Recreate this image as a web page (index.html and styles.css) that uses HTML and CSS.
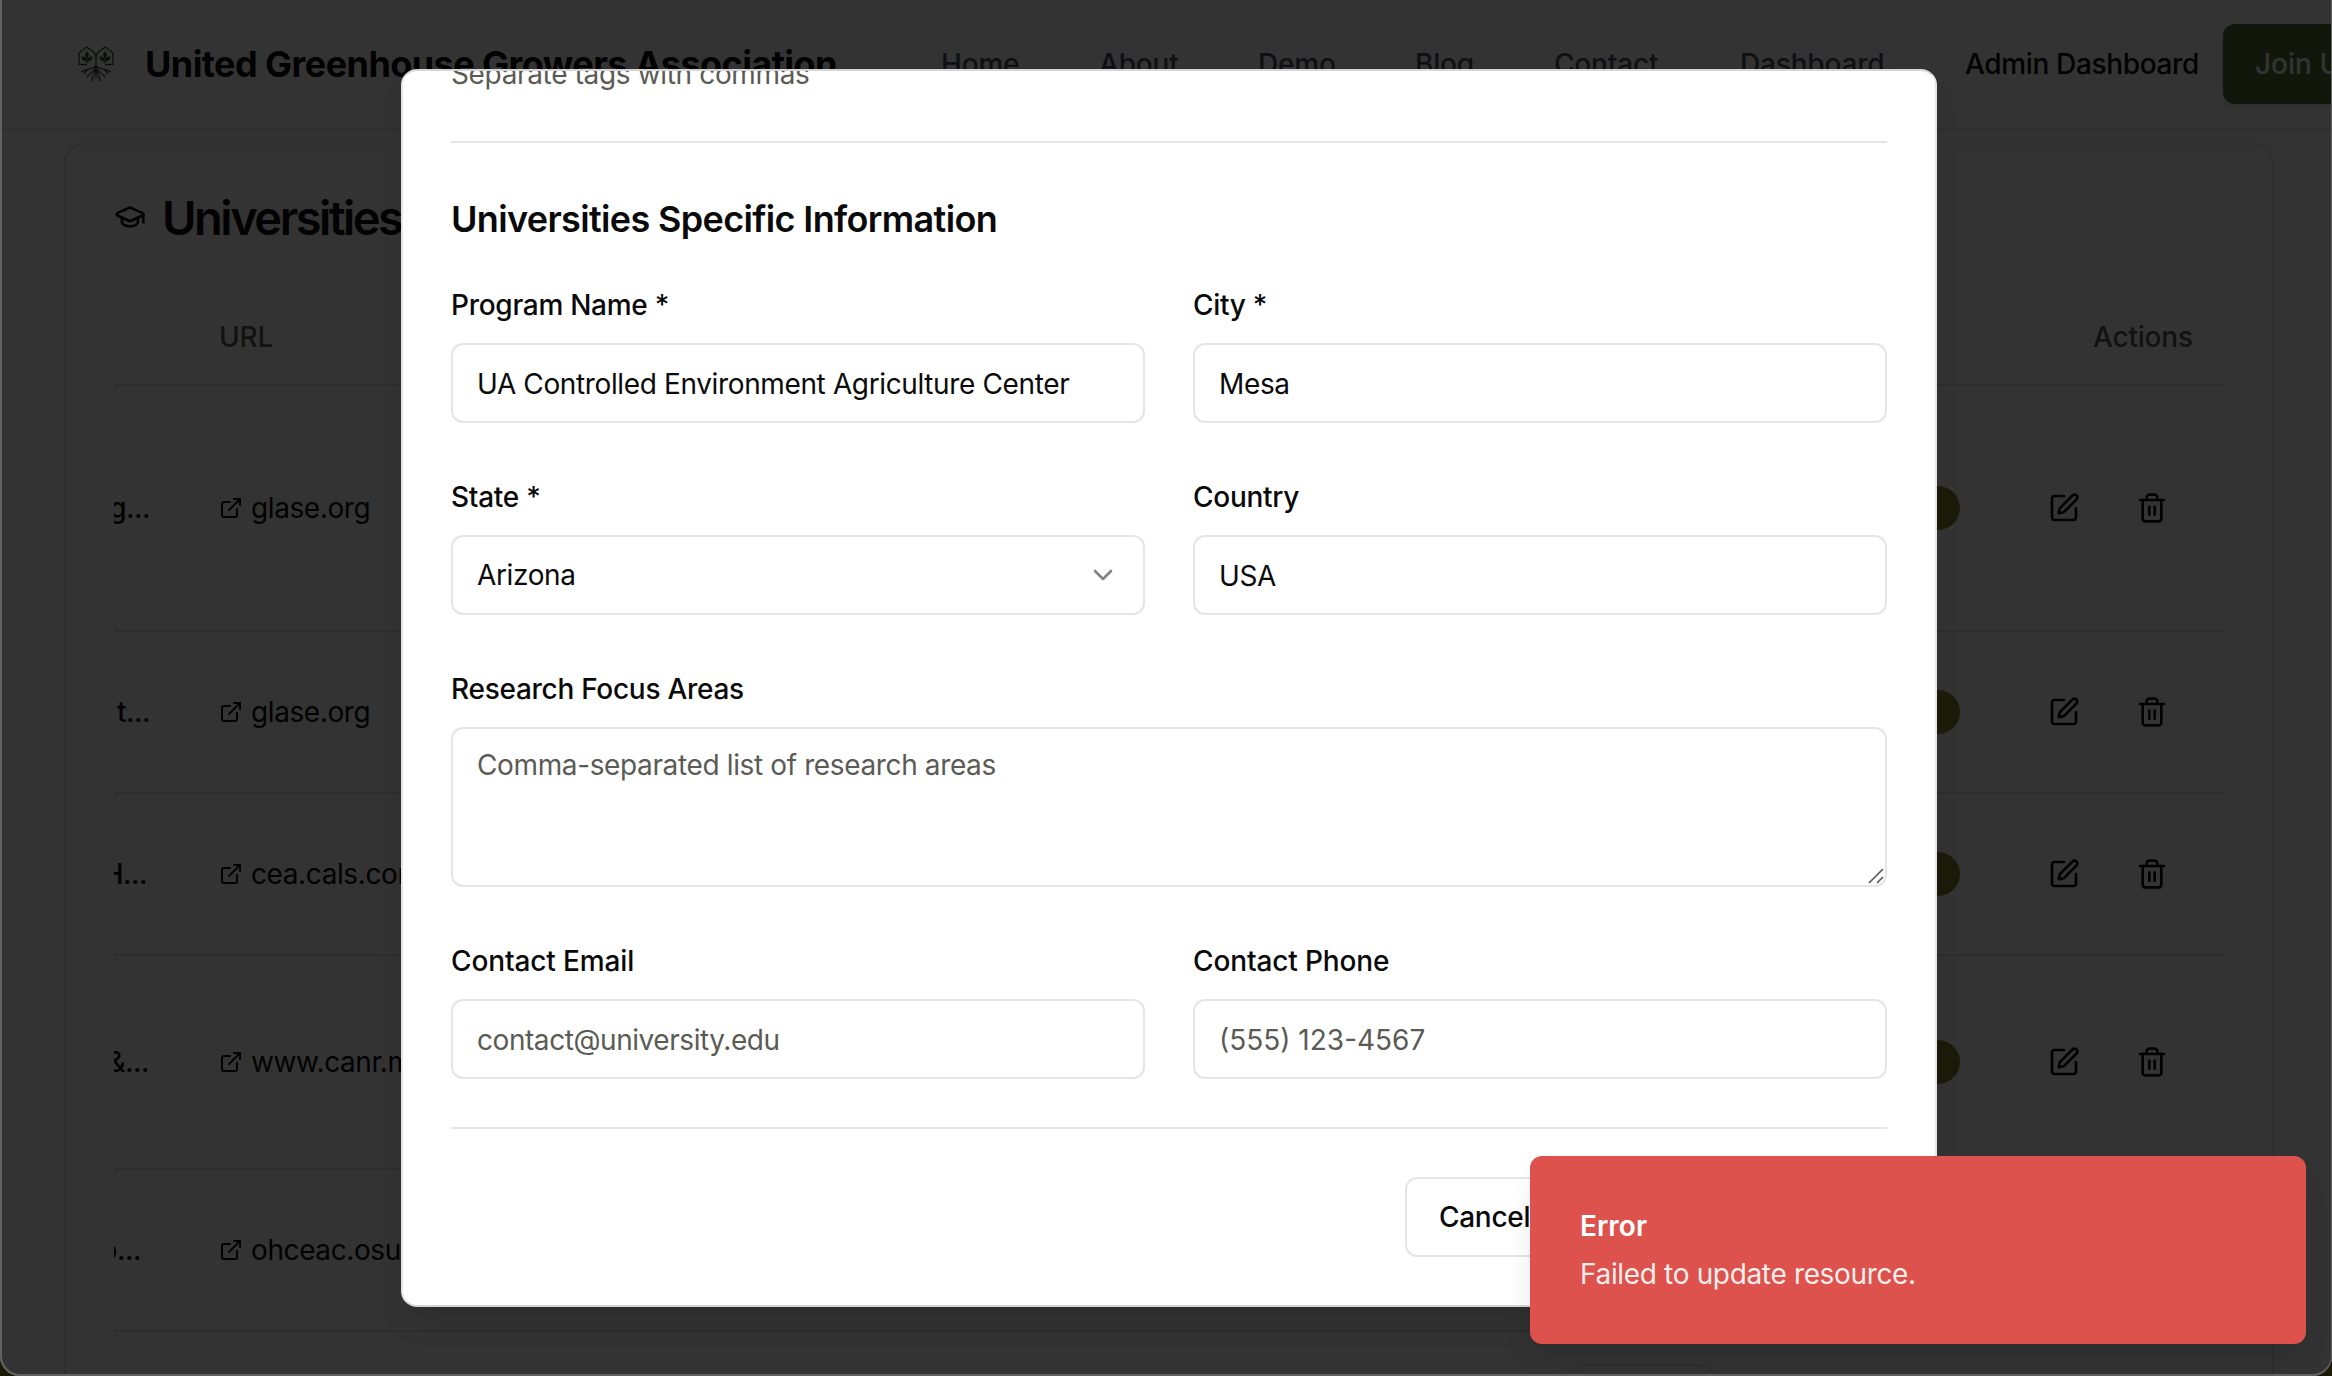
FILE: index.html
```html
<!DOCTYPE html>
<html lang="en">
<head>
<meta charset="utf-8">
<title>Admin Dashboard</title>
<link rel="stylesheet" href="styles.css">
</head>
<body>
<svg class="sprite" aria-hidden="true">
  <symbol id="edit" viewBox="0 0 24 24"><path d="M12 3H5a2 2 0 0 0-2 2v14a2 2 0 0 0 2 2h14a2 2 0 0 0 2-2v-7"/><path d="M18.375 2.625a1 1 0 0 1 3 3l-9.013 9.014a2 2 0 0 1-.853.505l-2.873.84a.5.5 0 0 1-.62-.62l.84-2.873a2 2 0 0 1 .506-.852z"/></symbol>
  <symbol id="trash" viewBox="0 0 24 24"><path d="M3 6h18"/><path d="M19 6v14c0 1-1 2-2 2H7c-1 0-2-1-2-2V6"/><path d="M8 6V4c0-1 1-2 2-2h4c1 0 2 1 2 2v2"/><path d="M10 11v6"/><path d="M14 11v6"/></symbol>
  <symbol id="external" viewBox="0 0 24 24"><path d="M15 3h6v6"/><path d="M10 14 21 3"/><path d="M18 13v6a2 2 0 0 1-2 2H5a2 2 0 0 1-2-2V8a2 2 0 0 1 2-2h6"/></symbol>
  <symbol id="cap" viewBox="0 0 24 24"><path d="M21.42 10.922a1 1 0 0 0-.019-1.838L12.83 5.18a2 2 0 0 0-1.66 0L2.6 9.08a1 1 0 0 0 0 1.832l8.57 3.908a2 2 0 0 0 1.66 0z"/><path d="M22 10v6"/><path d="M6 12.5V16a6 3 0 0 0 12 0v-3.5"/></symbol>
  <symbol id="chevron" viewBox="0 0 24 24"><path d="m6 9 6 6 6-6"/></symbol>
</svg>
<div class="window">
  <header class="topbar">
    <svg class="logo" viewBox="0 0 36 36"><path d="M9 18.5H1V7l7.500-6L16 6.500Q18 9 18 13v11M27 18.500h8V7l-7.500-6L20 6.500Q18 9 18 13"/><path d="M9 17v-7M27 17v-7M18 19c-2 5-8 3-15 7M18 19c2 5 8 3 15 7M18 21c-1 5-5 5-9 10M18 21c1 5 5 5 9 10M17 24c0 4-3 6-3 11M19 24c0 4 3 6 3 11M18 24v9M9 24.500l-3 3.500M27 24.500l3 3.500"/><path class="leaf" d="M9 5.500c3 3 2 5 0 7-2-2-3-4 0-7zM27 5.500c3 3 2 5 0 7-2-2-3-4 0-7zM3.500 10.500c4 0 5 2 5.300 5-3 0-5-1-5.300-5zM14.500 10.500c-4 0-5 2-5.300 5 3 0 5-1 5.300-5zM21.500 10.500c4 0 5 2 5.300 5-3 0-5-1-5.300-5zM32.500 10.500c-4 0-5 2-5.300 5 3 0 5-1 5.300-5z"/></svg>
    <span class="brand">United Greenhouse Growers Association</span>
    <nav class="nav">
      <a class="n1">Home</a><a class="n2">About</a><a class="n3">Demo</a><a class="n4">Blog</a><a class="n5">Contact</a><a class="n6">Dashboard</a>
    </nav>
    <a class="admin">Admin Dashboard</a>
    <a class="join">Join Us</a>
  </header>
  <main class="card">
    <h2 class="card-title"><svg class="icon cap"><use href="#cap"/></svg>Universities</h2>
    <div class="table">
      <div class="row head"><span class="name"></span><span class="url">URL</span><span class="actions-label">Actions</span></div>
      <div class="row tall"><span class="name">Greenhouse Lighting and Systems Eng...</span><span class="url link"><svg class="icon ext"><use href="#external"/></svg>glase.org</span><span class="badge"></span><span class="actions"><svg class="icon"><use href="#edit"/></svg><svg class="icon"><use href="#trash"/></svg></span></div>
      <div class="row"><span class="name">Consortium t...</span><span class="url link"><svg class="icon ext"><use href="#external"/></svg>glase.org</span><span class="badge"></span><span class="actions"><svg class="icon"><use href="#edit"/></svg><svg class="icon"><use href="#trash"/></svg></span></div>
      <div class="row"><span class="name inset-s">Cornell CEA H...</span><span class="url link"><svg class="icon ext"><use href="#external"/></svg>cea.cals.cornell.edu</span><span class="badge"></span><span class="actions"><svg class="icon"><use href="#edit"/></svg><svg class="icon"><use href="#trash"/></svg></span></div>
      <div class="row mid"><span class="name inset-xs">Floriculture &amp;...</span><span class="url link"><svg class="icon ext"><use href="#external"/></svg>www.canr.msu.edu</span><span class="badge"></span><span class="actions"><svg class="icon"><use href="#edit"/></svg><svg class="icon"><use href="#trash"/></svg></span></div>
      <div class="row"><span class="name inset-l">Ohio CEA Co...</span><span class="url link"><svg class="icon ext"><use href="#external"/></svg>ohceac.osu.edu</span><span class="badge"></span><span class="actions"><svg class="icon"><use href="#edit"/></svg><svg class="icon"><use href="#trash"/></svg></span></div>
    </div>
    <div class="pager"></div>
  </main>
  <div class="overlay"></div>
  <section class="modal">
    <p class="hint"><span class="hint-text">Separate tags with commas</span></p>
    <form class="form">
      <h3 class="section-title">Universities Specific Information</h3>
      <div class="grid">
        <div class="field"><label>Program Name *</label><div class="input">UA Controlled Environment Agriculture Center</div></div>
        <div class="field"><label>City *</label><div class="input">Mesa</div></div>
        <div class="field"><label>State *</label><div class="input select">Arizona<svg class="icon chev"><use href="#chevron"/></svg></div></div>
        <div class="field"><label>Country</label><div class="input">USA</div></div>
        <div class="field wide"><label>Research Focus Areas</label><div class="input area muted">Comma-separated list of research areas<svg class="grip" viewBox="0 0 16 16"><path d="M1 15 15 1M9 15l6-6"/></svg></div></div>
        <div class="field"><label class="loose">Contact Email</label><div class="input muted email">contact@university.edu</div></div>
        <div class="field"><label class="loose">Contact Phone</label><div class="input muted phone">(555) 123-4567</div></div>
      </div>
      <div class="footer"><span class="cancel">Cancel</span><span class="submit"></span></div>
    </form>
  </section>
  <aside class="toast"><strong>Error</strong><p>Failed to update resource.</p></aside>
  <div class="frame"></div>
</div>
</body>
</html>
```
FILE: styles.css
```css
* { box-sizing: border-box; }
body { margin: 0; width: 2332px; height: 1376px; overflow: hidden; background: #1c1a06; font: 28px/40px Inter, "Liberation Sans", sans-serif; color: #0a0a0a; }
p, h2, h3 { margin: 0; }
.sprite { position: absolute; width: 0; height: 0; }
.icon { width: 32px; height: 32px; fill: none; stroke: currentColor; stroke-width: 2; stroke-linecap: round; stroke-linejoin: round; flex: none; }
.window { position: relative; width: 2332px; height: 1376px; overflow: hidden; background: #fff; border-radius: 0 0 20px 20px; }
.topbar { display: flex; align-items: center; height: 128px; padding-left: 78px; box-shadow: 0 2px 5px rgba(0,0,0,.12); white-space: nowrap; }
.logo { width: 36px; height: 36px; margin-right: 31px; fill: none; stroke: #3c4a42; stroke-width: 1.3; flex: none; }
.leaf { fill: #34502e; stroke: none; }
.brand { width: 796px; font-size: 36px; font-weight: 700; letter-spacing: -.56px; flex: none; }
.nav { display: flex; width: 1024px; color: #4b5060; font-weight: 500; letter-spacing: -.17px; flex: none; }
.n1 { width: 158px; } .n2 { width: 159px; } .n3 { width: 157px; } .n4 { width: 139px; } .n5 { width: 186px; }
.admin { width: 258px; font-weight: 500; letter-spacing: -.35px; flex: none; }
.join { flex: none; width: 170px; height: 80px; padding: 20px 32px; border-radius: 12px; background: #5a7338; color: #fff; font-weight: 500; box-shadow: 0 2px 4px rgba(0,0,0,.15); }
.card { margin: 15px 0 0 64px; width: 2210px; height: 1260px; border: 2px solid #e5e5e5; border-radius: 20px; padding: 38px 48px 0; box-shadow: 0 2px 4px rgba(0,0,0,.06); }
.card-title { display: flex; align-items: center; gap: 16px; height: 70px; font-size: 47px; font-weight: 600; line-height: 70px; letter-spacing: -2.5px; }
.cap { margin-bottom: 2px; }
.table { margin-top: 37px; }
.row { display: flex; align-items: center; height: 162px; border-bottom: 2px solid #e5e5e5; }
.row.head { height: 96px; color: #5b5b55; font-weight: 500; letter-spacing: -.2px; }
.row.tall { height: 246px; }
.row.mid { height: 214px; }
.name { display: flex; justify-content: flex-end; width: 36px; margin-right: 69px; overflow: hidden; white-space: nowrap; font-weight: 500; letter-spacing: -.5px; flex: none; }
.inset-xs { padding-right: 1px; }
.inset-s { padding-right: 3px; }
.inset-l { padding-right: 9px; }
.url { width: 1661px; flex: none; }
.link { display: flex; align-items: center; gap: 8px; letter-spacing: -.4px; }
.ext { width: 24px; height: 24px; }
.badge { width: 80px; height: 44px; border-radius: 22px; background: #80872c; }
.actions { display: flex; gap: 56px; margin-left: 88px; }
.actions-label { margin-left: 213px; }
.pager { margin: 32px 0 0 1450px; width: 158px; height: 72px; border: 2px solid #e5e5e5; border-radius: 24px; }
.overlay { position: absolute; inset: 0; background: rgba(0,0,0,.8); }
.modal { position: absolute; left: 401px; top: 69px; width: 1536px; height: 1238px; padding: 0 48px; border: 2px solid #e5e5e5; border-top-color: #d6d6d6; border-bottom-color: #d6d6d6; border-radius: 16px; background: #fff; overflow: hidden; box-shadow: 0 20px 30px -6px rgba(0,0,0,.12); }
.hint { display: flex; align-items: flex-start; height: 70px; color: #5b5b55; letter-spacing: -.35px; }
.hint-text { margin-top: -17px; }
.form { border-top: 2px solid #e5e5e5; padding-top: 48px; }
.section-title { font-size: 36px; line-height: 56px; font-weight: 600; letter-spacing: -.65px; }
.grid { display: grid; grid-template-columns: 694px 694px; column-gap: 48px; row-gap: 54px; margin-top: 38px; }
.field { display: flex; flex-direction: column; }
.field.wide { grid-column: 1 / 3; }
label { font-weight: 500; margin-bottom: 18px; letter-spacing: -.28px; }
label.loose { letter-spacing: -.13px; }
.input { position: relative; display: flex; align-items: center; height: 80px; border: 2px solid #e5e5e5; border-radius: 12px; padding: 2px 24px 0; letter-spacing: -.37px; }
.select { justify-content: space-between; padding-top: 0; }
.chev { color: #858585; }
.muted { color: #5b5b55; }
.email { letter-spacing: -.44px; }
.phone { letter-spacing: 0; }
.area { height: 160px; align-items: flex-start; padding-top: 16px; }
.grip { position: absolute; right: 1px; bottom: 1px; width: 16px; height: 16px; stroke: #555; stroke-width: 1.6; }
.footer { display: flex; justify-content: flex-end; gap: 16px; margin-top: 48px; padding-top: 48px; border-top: 2px solid #e5e5e5; }
.cancel { height: 80px; width: 158px; padding: 18px 32px; border: 2px solid #e5e5e5; border-radius: 12px; font-weight: 500; letter-spacing: -.3px; }
.submit { width: 308px; height: 80px; border-radius: 12px; background: #5a7338; }
.toast { position: absolute; left: 1530px; top: 1156px; width: 776px; height: 188px; padding: 50px; border-radius: 12px; background: #dd524c; color: #fff; box-shadow: 0 20px 30px -6px rgba(0,0,0,.12); }
.toast strong { display: block; font-weight: 600; }
.toast p { margin-top: 8px; opacity: .9; letter-spacing: -.34px; }
.frame { position: absolute; inset: -2px 0 0 0; border: 2px solid #626262; border-right-width: 1px; border-radius: 0 0 20px 20px; }
```
